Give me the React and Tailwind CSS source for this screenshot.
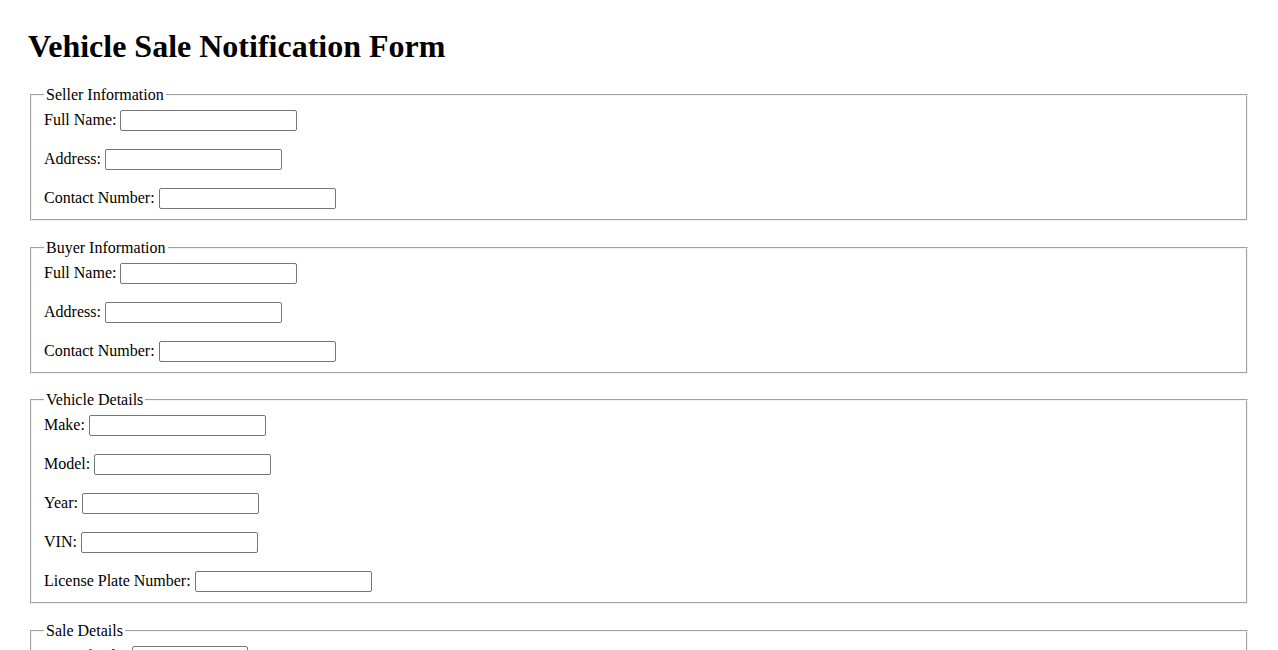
import React from "react";

function Row({ label, w = "w-[177px]" }) {
  return (
    <div className="flex items-center h-[21px] gap-[4px] mb-[18px] last:mb-0">
      <label className="leading-[18.4px] whitespace-nowrap">{label}</label>
      <input
        type="text"
        className={`${w} h-[21px] border border-[#767676] rounded-[2px] bg-white px-[2px] text-[13.33px] font-['Liberation_Sans',sans-serif]`}
      />
    </div>
  );
}

function Section({ title, children }) {
  return (
    <fieldset className="mx-[2px] mb-[17.5px] border-2 [border-style:groove] border-[#f4f4f4] px-[12px] pt-[5.6px] pb-[10px]">
      <legend className="px-[2px] leading-[18.4px]">{title}</legend>
      {children}
    </fieldset>
  );
}

export default function App() {
  return (
    <div className="bg-white text-black min-h-screen px-[28px] pt-[28px] pb-[28px] font-['Liberation_Serif',serif] text-[16px]">
      <h1 className="text-[32px] font-bold leading-[36.8px] mb-[21.4px]">
        Vehicle Sale Notification Form
      </h1>
      <form>
        <Section title="Seller Information">
          <Row label="Full Name:" />
          <Row label="Address:" />
          <Row label="Contact Number:" />
        </Section>
        <Section title="Buyer Information">
          <Row label="Full Name:" />
          <Row label="Address:" />
          <Row label="Contact Number:" />
        </Section>
        <Section title="Vehicle Details">
          <Row label="Make:" />
          <Row label="Model:" />
          <Row label="Year:" />
          <Row label="VIN:" />
          <Row label="License Plate Number:" />
        </Section>
        <Section title="Sale Details">
          <Row label="Date of Sale:" w="w-[116px]" />
          <Row label="Sale Price:" />
        </Section>
      </form>
    </div>
  );
}
